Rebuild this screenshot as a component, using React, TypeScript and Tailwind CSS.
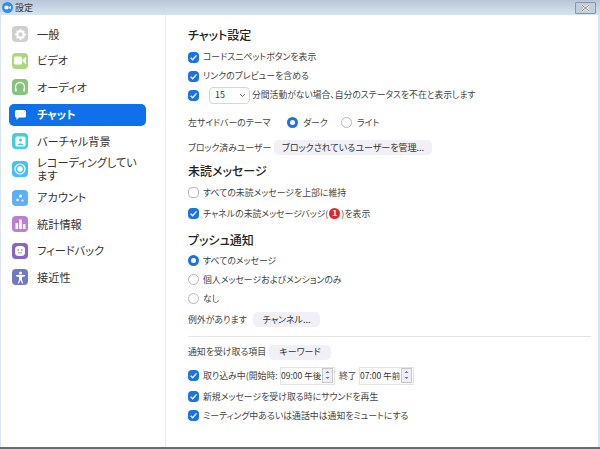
import React from "react";

const Check = () => (
  <span className="w-[11px] h-[11px] rounded-[4px] bg-[#1a73e0] flex items-center justify-center shrink-0">
    <svg width="9" height="9" viewBox="0 0 10 10" fill="none" stroke="#fff" strokeWidth="1.5"><path d="M1.8 5.2 4.1 7.5 8.3 2.7" /></svg>
  </span>
);
const Uncheck = () => <span className="w-[11px] h-[11px] rounded-[4px] border border-[#b8b8c0] bg-white shrink-0" />;
const RadioOn = () => (
  <span className="w-[11px] h-[11px] rounded-full bg-[#1a73e0] flex items-center justify-center shrink-0">
    <span className="w-[5px] h-[5px] rounded-full bg-white" />
  </span>
);
const RadioOff = () => <span className="w-[11px] h-[11px] rounded-full border border-[#b8b8c0] bg-white shrink-0" />;

const Tile = ({ color, children }: { color: string; children: React.ReactNode }) => (
  <span className={`w-4 h-4 rounded-[4px] flex items-center justify-center shrink-0 ${color}`}>{children}</span>
);

const Spin = () => (
  <span className="flex flex-col w-[11px] h-[15px] border border-[#c8c8c8] bg-[#f0f0f4] text-[#5577aa]">
    <svg width="9" height="6" viewBox="0 0 8 6" fill="currentColor"><path d="M4 2 6 4H2Z" /></svg>
    <svg width="9" height="6" viewBox="0 0 8 6" fill="currentColor"><path d="M4 4 2 2H6Z" /></svg>
  </span>
);

const Time = ({ t }: { t: string }) => (
  <span className="flex items-center h-[18px] w-[55px] border border-[#e2e2e2] bg-white pr-px justify-between text-[#333]">
    <span className="text-[8.5px] whitespace-nowrap">{t}</span>
    <Spin />
  </span>
);

const items: [string, string, React.ReactNode][] = [
  ["一般", "bg-[#cfcfcf]", <svg key="a" width="11" height="11" viewBox="0 0 12 12"><circle cx="6" cy="6" r="3.6" fill="none" stroke="#fff" strokeWidth="2.4" /><path d="M6 0v2M6 10v2M0 6h2M10 6h2M1.8 1.8l1.4 1.4M8.8 8.8l1.4 1.4M1.8 10.2l1.4-1.4M8.8 3.2l1.4-1.4" stroke="#fff" strokeWidth="1.5" /></svg>],
  ["ビデオ", "bg-[#acd77f]", <svg key="b" width="12" height="9" viewBox="0 0 12 9" fill="#fff"><rect x="0" y="0.5" width="8" height="8" rx="1.5" /><path d="M8.5 3.5 12 1v7L8.5 5.5Z" /></svg>],
  ["オーディオ", "bg-[#84c47d]", <svg key="c" width="12" height="12" viewBox="0 0 12 12" fill="none" stroke="#fff" strokeWidth="1.3"><path d="M1.5 10V6a4.5 4.5 0 0 1 9 0v4" /><rect x="1" y="7.5" width="1.6" height="3" fill="#fff" stroke="none" /><rect x="9.4" y="7.5" width="1.6" height="3" fill="#fff" stroke="none" /></svg>],
];
const items2: [string, string, React.ReactNode][] = [
  ["アカウント", "bg-[#5cb0f5]", <svg key="f" width="10" height="10" viewBox="0 0 10 10" fill="#fff"><circle cx="5.5" cy="3" r="1.5" /><circle cx="2.5" cy="7" r="1.3" /><circle cx="7.5" cy="7.5" r="1.1" /></svg>],
  ["統計情報", "bg-[#bd7fcf]", <svg key="g" width="11" height="10" viewBox="0 0 11 10" fill="#fff"><rect x="0.5" y="4" width="2.6" height="6" /><rect x="4.2" y="0.5" width="2.6" height="9.5" /><rect x="7.9" y="5" width="2.6" height="5" /></svg>],
  ["フィードバック", "bg-[#8a63c4]", <svg key="h" width="12" height="12" viewBox="0 0 12 12"><rect x="1" y="1" width="10" height="10" rx="3.5" fill="#fff" /><circle cx="4.2" cy="5" r=".8" fill="#8a63c4" /><circle cx="7.8" cy="5" r=".8" fill="#8a63c4" /><path d="M4.2 7.8h3.6" stroke="#8a63c4" strokeWidth=".8" /></svg>],
  ["接近性", "bg-[#7079c4]", <svg key="i" width="11" height="13" viewBox="0 0 11 13" fill="#fff"><circle cx="5.5" cy="2" r="1.6" /><path d="M1 4h9v1.2L7 6v3l1.2 3.5H7L5.5 9 4 12.5H2.800L4 9V6L1 5.200Z" /></svg>],
];

const NavItem = ({ label, color, icon }: { label: string; color: string; icon: React.ReactNode }) => (
  <div className="flex items-center h-[26.6px] pl-[11px] gap-[9px] text-[11.2px] text-[#333]">
    <Tile color={color}>{icon}</Tile>
    <span>{label}</span>
  </div>
);

const Row = ({ children, h = "h-[19px]" }: { children: React.ReactNode; h?: string }) => (
  <div className={`flex items-center gap-1 ${h} whitespace-nowrap`}>{children}</div>
);
const Btn = ({ children, w }: { children: React.ReactNode; w: string }) => (
  <span className={`h-[15px] flex items-center justify-center rounded-[5px] bg-[#f0f0f6] text-[#333] text-[9px] whitespace-nowrap ${w}`}>{children}</span>
);
const H = ({ children }: { children: React.ReactNode }) => (
  <div className="text-[12px] leading-[16px] font-medium text-[#222]">{children}</div>
);

export default function App() {
  return (
    <div className="w-[600px] h-[449px] flex flex-col overflow-hidden bg-[#d9e6f2] font-['Noto_Sans_CJK_JP',sans-serif] [font-feature-settings:'palt'] text-[8.9px] text-[#444]">
      <div className="h-[15px] shrink-0 flex items-center bg-gradient-to-b from-[#b8c7d7] to-[#d6e4f1] pl-[2px] pr-[4px] text-[#333]">
        <svg width="11" height="11" viewBox="0 0 11 11"><circle cx="5.5" cy="5.500" r="5.500" fill="#2d8cff" /><rect x="2.500" y="3.700" width="4" height="3.600" rx="1" fill="#fff" /><path d="M7 5 8.800 3.800v3.400L7 6Z" fill="#fff" /></svg>
        <span className="ml-[2px] text-[9px]">設定</span>
        <span className="ml-auto w-[21px] h-[12px] border border-[#8a93a8] bg-[#c2d0de] rounded-[1px] flex items-center justify-center">
          <svg width="9" height="8" viewBox="0 0 9 8" stroke="#fff" strokeWidth="2"><path d="M1 1l7 6M8 1 1 7" /><path d="M1 1l7 6M8 1 1 7" stroke="#555" strokeWidth=".7" /></svg>
        </span>
      </div>
      <div className="flex-1 flex ml-px mr-[2px] bg-white">
        <div className="w-[165px] shrink-0 border-r border-[#ededed] pt-[6px]">
          {items.map(([l, c, i]) => <NavItem key={l} label={l} color={c} icon={i} />)}
          <div className="mx-[8px] h-[22px] mt-[3px] mb-[2px] rounded-[5px] bg-[#0e71eb] w-[137px] flex items-center pl-[6px] gap-[11px] text-white text-[11.2px] font-bold">
            <svg width="11" height="10" viewBox="0 0 11 10" fill="#fff"><path d="M1.500 0h8A1.500 1.500 0 0 1 11 1.500v4.500A1.500 1.500 0 0 1 9.500 7.500H4L1.500 10V7.500A1.500 1.500 0 0 1 0 6V1.500A1.500 1.500 0 0 1 1.500 0Z" /></svg>
            <span>チャット</span>
          </div>
          <NavItem label="バーチャル背景" color="bg-[#42cfe0]" icon={<svg width="11" height="11" viewBox="0 0 11 11"><rect x=".5" y=".5" width="10" height="10" rx="1.500" fill="#fff" /><circle cx="5.500" cy="4" r="1.500" fill="#42cfe0" /><path d="M2.500 9c.5-2 5.500-2 6 0Z" fill="#42cfe0" /></svg>} />
          <div className="flex items-center h-[30px] pl-[11px] gap-[9px] text-[11.2px] leading-[13px] text-[#333]">
            <Tile color="bg-[#45c0fb]"><svg width="12" height="12" viewBox="0 0 12 12" fill="none" stroke="#fff"><circle cx="6" cy="6" r="5" strokeWidth="1.200" /><circle cx="6" cy="6" r="2.800" fill="#fff" stroke="none" /></svg></Tile>
            <span className="w-[104px]">レコーディングしてい<br />ます</span>
          </div>
          {items2.map(([l, c, i]) => <NavItem key={l} label={l} color={c} icon={i} />)}
        </div>
        <div className="flex-1 pl-[22px] pr-[7px] pt-[12px]">
          <H>チャット設定</H>
          <div className="mt-[4.5px]">
            <Row><Check /><span>コードスニペットボタンを表示</span></Row>
            <Row><Check /><span>リンクのプレビューを含める</span></Row>
            <Row>
              <Check />
              <span className="ml-[6px] w-[41px] h-[17px] rounded-[4px] border border-[#d5d5dc] flex items-center justify-between pl-[5px] pr-[3px] text-[#333]">
                15
                <svg width="7" height="5" viewBox="0 0 7 5" fill="none" stroke="#666" strokeWidth="1"><path d="M1 1l2.500 2.500L6 1" /></svg>
              </span>
              <span className="-ml-[2px] text-[8.8px]">分間活動がない場合、自分のステータスを不在と表示します</span>
            </Row>
          </div>
          <Row h="h-[19px] mt-[8.5px]">
            <span className="w-[95px]">左サイドバーのテーマ</span>
            <RadioOn />
            <span className="w-[35px] pl-px">ダーク</span>
            <RadioOff />
            <span className="pl-px">ライト</span>
          </Row>
          <Row h="h-[19px] mt-[6px]">
            <span className="w-[82px]">ブロック済みユーザー</span>
            <Btn w="w-[158px]">ブロックされているユーザーを管理...</Btn>
          </Row>
          <div className="mt-[6px]"><H>未読メッセージ</H></div>
          <div className="mt-[3px]">
            <Row h="h-[21px]"><Uncheck /><span>すべての未読メッセージを上部に維持</span></Row>
            <Row h="h-[21px]"><Check /><span className="flex items-center">チャネルの未読メッセージバッジ(<span className="w-[11px] h-[11px] rounded-full bg-[#e02828] text-white text-[8px] font-bold flex items-center justify-center mx-[1px]">1</span>)を表示</span></Row>
          </div>
          <div className="mt-[8px]"><H>プッシュ通知</H></div>
          <div className="mt-[3px]">
            <Row><RadioOn /><span>すべてのメッセージ</span></Row>
            <Row><RadioOff /><span>個人メッセージおよびメンションのみ</span></Row>
            <Row><RadioOff /><span>なし</span></Row>
          </div>
          <Row h="h-[19px] mt-[2px]">
            <span className="w-[61px]">例外があります</span>
            <Btn w="w-[67px]">チャンネル...</Btn>
          </Row>
          <div className="h-px bg-[#e4e4e4] mt-[7px]" />
          <Row h="h-[20px] mt-[5px]">
            <span className="w-[77px]">通知を受け取る項目</span>
            <Btn w="w-[62px]">キーワード</Btn>
          </Row>
          <Row h="h-[19px] mt-[4px]">
            <Check />
            <span className="w-[73px]">取り込み中(開始時:</span>
            <Time t="09:00 午後" />
            <span className="w-[16px]">終了</span>
            <Time t="07:00 午前" />
          </Row>
          <Row h="h-[19px] mt-[2px]"><Check /><span>新規メッセージを受け取る時にサウンドを再生</span></Row>
          <Row><Check /><span>ミーティング中あるいは通話中は通知をミュートにする</span></Row>
        </div>
      </div>
      <div className="h-[2px] shrink-0 bg-[#666c74]" />
    </div>
  );
}
